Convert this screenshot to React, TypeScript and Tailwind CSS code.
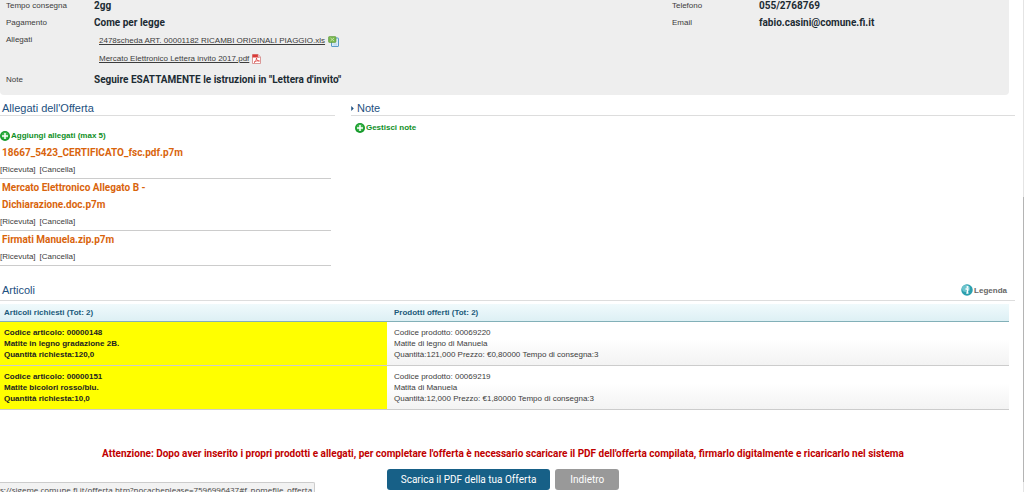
import React from 'react';

interface Attachment {
  name: string;
  lines: string[];
}

interface Article {
  code: string;
  title: string;
  quantity: string;
  product: string;
  productName: string;
  details: string;
}

const ATTACHMENTS: Attachment[] = [
  { name: 'certificato', lines: ['18667_5423_CERTIFICATO_fsc.pdf.p7m'] },
  { name: 'allegato-b', lines: ['Mercato Elettronico Allegato B -', 'Dichiarazione.doc.p7m'] },
  { name: 'firmati', lines: ['Firmati Manuela.zip.p7m'] },
];

const ARTICLES: Article[] = [
  {
    code: '00000148',
    title: 'Matite in legno gradazione 2B.',
    quantity: '120,0',
    product: '00069220',
    productName: 'Matite di legno di Manuela',
    details: 'Quantità:121,000 Prezzo: €0,80000 Tempo di consegna:3',
  },
  {
    code: '00000151',
    title: 'Matite bicolori rosso/blu.',
    quantity: '10,0',
    product: '00069219',
    productName: 'Matita di Manuela',
    details: 'Quantità:12,000 Prezzo: €1,80000 Tempo di consegna:3',
  },
];

const PlusIcon = () => (
  <svg viewBox="0 0 20 20" className="w-[10px] h-[10px] shrink-0" aria-hidden="true">
    <circle cx="10" cy="10" r="10" fill="#169a2c" />
    <circle cx="10" cy="9" r="7" fill="#3db54a" />
    <path d="M10 4v12M4 10h12" stroke="#fff" strokeWidth="3" />
  </svg>
);

const SheetIcon = () => (
  <svg viewBox="0 0 22 22" className="w-[11px] h-[11px] shrink-0" aria-hidden="true">
    <rect x="7" y="4" width="14" height="17" rx="1" fill="#dcecf8" stroke="#5b9bc8" strokeWidth="2" />
    <path d="M11 16h7M11 18h7" stroke="#9cc4e0" strokeWidth="1" />
    <rect x="1" y="1" width="15" height="12" rx="2" fill="#7ab84e" stroke="#4f8f2f" strokeWidth="1" />
    <path d="M5 4l7 6M12 4l-7 6" stroke="#c4e3ab" strokeWidth="2" />
  </svg>
);

const PdfIcon = () => (
  <svg viewBox="0 0 18 20" className="w-[9px] h-[10px] shrink-0" aria-hidden="true">
    <path d="M1 1h11l5 5v13H1z" fill="#fff" stroke="#d07a78" strokeWidth="1.5" />
    <path d="M1 1h11l3 3v3H1z" fill="#d93a36" />
    <path d="M12 1v5h5" fill="#f6dada" stroke="#c98a8a" />
    <path d="M4 17c3-2 5-6 5-9 0 4 2 6 6 6-4-1-8 0-11 3z" fill="none" stroke="#d93a36" strokeWidth="1.5" />
  </svg>
);

const InfoIcon = () => (
  <svg viewBox="0 0 24 24" className="w-[12px] h-[12px] shrink-0" aria-hidden="true">
    <circle cx="12" cy="12" r="11.5" fill="#2b9fae" />
    <ellipse cx="10" cy="9" rx="8" ry="7" fill="#6cc4cd" />
    <circle cx="13" cy="6" r="2.2" fill="#fff" />
    <path d="M9 10h5l-2 8h3" fill="none" stroke="#fff" strokeWidth="2.6" />
  </svg>
);

const App: React.FC = () => {
  return (
    <div className="h-screen overflow-hidden bg-white font-['Liberation_Sans',Arial,sans-serif] text-[8px] leading-[11px] text-[#3c3c3c]">
      {/* Request details */}
      <div className="mr-[15px] h-[95px] bg-[#eee] rounded-b-sm grid grid-cols-[66%_1fr] leading-[12px]">
        <dl className="grid grid-cols-[88px_1fr] content-start gap-y-[5px] pl-[6px]">
          <dt>Tempo consegna</dt>
          <dd className="font-[Roboto,sans-serif] text-[10px] font-bold text-[#1c2b33]">2gg</dd>
          <dt>Pagamento</dt>
          <dd className="font-[Roboto,sans-serif] text-[10px] font-bold text-[#1c2b33]">Come per legge</dd>
          <dt>Allegati</dt>
          <dd className="pt-px pl-[5px] pb-1 flex flex-col gap-[6px]">
            <span className="flex items-center gap-[3px]">
              <a href="#scheda" className="underline">2478scheda ART. 00001182 RICAMBI ORIGINALI PIAGGIO.xls</a>
              <SheetIcon />
            </span>
            <span className="flex items-center gap-[3px]">
              <a href="#lettera" className="underline">Mercato Elettronico Lettera invito 2017.pdf</a>
              <PdfIcon />
            </span>
          </dd>
          <dt>Note</dt>
          <dd className="font-[Roboto,sans-serif] text-[10px] font-bold text-[#1c2b33]">Seguire ESATTAMENTE le istruzioni in "Lettera d'invito"</dd>
        </dl>
        <dl className="grid grid-cols-[87px_1fr] content-start gap-y-[5px] pl-[6px]">
          <dt>Telefono</dt>
          <dd className="font-[Roboto,sans-serif] text-[10px] font-bold text-[#1c2b33]">055/2768769</dd>
          <dt>Email</dt>
          <dd className="font-[Roboto,sans-serif] text-[10px] font-bold text-[#1c2b33]">fabio.casini@comune.fi.it</dd>
        </dl>
      </div>

      {/* Attachments and notes */}
      <div className="mr-[9px] mt-[6px] flex gap-4">
        <section className="w-[33%]">
          <h2 className="border-b border-[#ddd] pl-[2px] text-[11px] leading-[14px] text-[#1d5080]">Allegati dell'Offerta</h2>
          <button type="button" className="mt-[11px] h-[17px] flex items-center gap-px font-bold text-[#0f8f1f]">
            <PlusIcon />
            Aggiungi allegati (max 5)
          </button>
          <ul className="mr-1">
            {ATTACHMENTS.map((item) => (
              <li key={item.name} className="border-b border-[#ccc] leading-[17px]">
                <a href={`#${item.name}`} className="block pl-[2px] font-[Roboto,sans-serif] text-[10px] font-bold text-[#d9640c]">
                  {item.lines.map((line) => (
                    <span key={line} className="block">{line}</span>
                  ))}
                </a>
                <div className="flex gap-1">
                  <a href="#ricevuta">[Ricevuta]</a>
                  <a href="#cancella">[Cancella]</a>
                </div>
              </li>
            ))}
          </ul>
        </section>
        <section className="flex-1">
          <h2 className="border-b border-[#ddd] flex items-center gap-[3px] text-[11px] leading-[14px] text-[#1d5080]">
            <svg viewBox="0 0 3 6" className="w-[3px] h-[5px]" aria-hidden="true">
              <path d="M0 0l3 3-3 3z" fill="#1d5080" />
            </svg>
            Note
          </h2>
          <button type="button" className="mt-[3px] ml-1 h-[17px] flex items-center gap-px font-bold text-[#0f8f1f]">
            <PlusIcon />
            Gestisci note
          </button>
        </section>
      </div>

      {/* Articles */}
      <section className="mt-[17px]">
        <div className="mr-[9px] border-b border-[#ddd] h-[18px] flex items-start justify-between pl-[2px] pr-2">
          <h2 className="text-[11px] leading-[14px] text-[#1d5080]">Articoli</h2>
          <button type="button" className="mt-px flex items-center gap-px font-bold text-[#666]">
            <InfoIcon />
            Legenda
          </button>
        </div>
        <div className="mr-[15px] mt-[3px]">
          <table className="w-full table-fixed border-separate border-spacing-0 text-left align-top">
            <thead>
              <tr className="h-[18px] bg-linear-to-b from-[#f0fafc] to-[#dceff4] text-[#1b5a7a]">
                <th className="w-[387px] border-b border-[#82b0b8] pl-1 font-bold">Articoli richiesti (Tot: 2)</th>
                <th className="border-b border-[#82b0b8] pl-[7px] font-bold">Prodotti offerti (Tot: 2)</th>
              </tr>
            </thead>
            <tbody>
              {ARTICLES.map((article) => (
                <tr key={article.code}>
                  <td className="border-b border-[#ccc] bg-[#ff0] py-[5px] pl-1 font-bold text-[#222]">
                    <p>Codice articolo: {article.code}</p>
                    <p>{article.title}</p>
                    <p>Quantità richiesta:{article.quantity}</p>
                  </td>
                  <td className="border-b border-[#ccc] bg-linear-to-b from-white from-40% to-[#f3f3f3] py-[5px] pl-[7px]">
                    <p>Codice prodotto: {article.product}</p>
                    <p>{article.productName}</p>
                    <p>{article.details}</p>
                  </td>
                </tr>
              ))}
            </tbody>
          </table>
        </div>
      </section>

      {/* Actions */}
      <div className="mr-[18px] mt-[37px] text-center font-[Roboto,sans-serif] text-[10px] leading-[14px]">
        <p className="font-bold text-[#c00000]">
          Attenzione: Dopo aver inserito i propri prodotti e allegati, per completare l'offerta è necessario scaricare il PDF dell'offerta compilata, firmarlo digitalmente e ricaricarlo nel sistema
        </p>
        <div className="mt-2 flex justify-center gap-[5px]">
          <button type="button" className="h-[21px] rounded-[3px] bg-[#176087] px-[14px] text-white">Scarica il PDF della tua Offerta</button>
          <button type="button" className="h-[21px] rounded-[3px] bg-[#999] px-[15px] text-white">Indietro</button>
        </div>
      </div>

      {/* Scrollbar edge */}
      <div className="fixed inset-y-0 right-0 flex w-px flex-col bg-[#e4e4e4]">
        <div className="h-[40%]" />
        <div className="h-[58%] bg-[#b4b4b4]" />
      </div>

      {/* Link preview at the window's edge */}
      <div className="fixed bottom-0 left-0 h-[10px] overflow-hidden whitespace-nowrap rounded-tr-xs border-t border-r border-[#ccc] bg-[#f2f2f2] pr-[2px] font-['Open_Sans',sans-serif] text-[8px] leading-[13px] text-[#444]">
        s://sigeme.comune.fi.it/offerta.htm?nocacheplease=7596996437#f_nomefile_offerta
      </div>
    </div>
  );
};

export default App;
